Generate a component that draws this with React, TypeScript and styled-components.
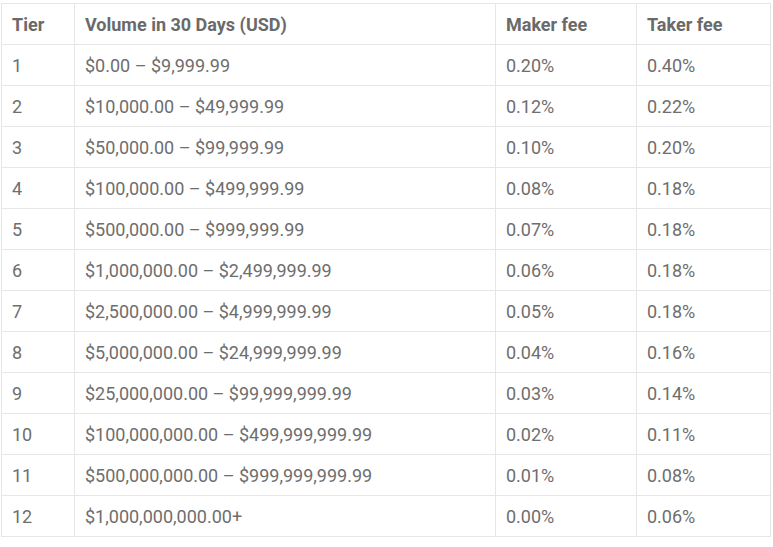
import styled, { createGlobalStyle } from "styled-components";

const GlobalStyle = createGlobalStyle`
  body {
    margin: 0;
    background: #ffffff;
    font-family: Roboto, "Liberation Sans", sans-serif;
  }
`;

type Tier = {
  tier: number;
  volume: string;
  maker: string;
  taker: string;
};

const tiers: Tier[] = [
  { tier: 1, volume: "$0.00 – $9,999.99", maker: "0.20%", taker: "0.40%" },
  { tier: 2, volume: "$10,000.00 – $49,999.99", maker: "0.12%", taker: "0.22%" },
  { tier: 3, volume: "$50,000.00 – $99,999.99", maker: "0.10%", taker: "0.20%" },
  { tier: 4, volume: "$100,000.00 – $499,999.99", maker: "0.08%", taker: "0.18%" },
  { tier: 5, volume: "$500,000.00 – $999,999.99", maker: "0.07%", taker: "0.18%" },
  { tier: 6, volume: "$1,000,000.00 – $2,499,999.99", maker: "0.06%", taker: "0.18%" },
  { tier: 7, volume: "$2,500,000.00 – $4,999,999.99", maker: "0.05%", taker: "0.18%" },
  { tier: 8, volume: "$5,000,000.00 – $24,999,999.99", maker: "0.04%", taker: "0.16%" },
  { tier: 9, volume: "$25,000,000.00 – $99,999,999.99", maker: "0.03%", taker: "0.14%" },
  { tier: 10, volume: "$100,000,000.00 – $499,999,999.99", maker: "0.02%", taker: "0.11%" },
  { tier: 11, volume: "$500,000,000.00 – $999,999,999.99", maker: "0.01%", taker: "0.08%" },
  { tier: 12, volume: "$1,000,000,000.00+", maker: "0.00%", taker: "0.06%" },
];

export default function App() {
  return (
    <>
      <GlobalStyle />
      <Page>
        <FeeTable>
          <colgroup>
            <col style={{ width: 73 }} />
            <col style={{ width: 421 }} />
            <col style={{ width: 141 }} />
            <col style={{ width: 134 }} />
          </colgroup>
          <thead>
            <tr>
              <HeadCell>Tier</HeadCell>
              <HeadCell>Volume in 30 Days (USD)</HeadCell>
              <HeadCell>Maker fee</HeadCell>
              <HeadCell>Taker fee</HeadCell>
            </tr>
          </thead>
          <tbody>
            {tiers.map((t) => (
              <tr key={t.tier}>
                <Cell>{t.tier}</Cell>
                <Cell>{t.volume}</Cell>
                <Cell>{t.maker}</Cell>
                <Cell>{t.taker}</Cell>
              </tr>
            ))}
          </tbody>
        </FeeTable>
      </Page>
    </>
  );
}

/** styles */

const Page = styled.div`
  padding: 3px 0 0 1px;
`;

const FeeTable = styled.table`
  border-collapse: collapse;
  table-layout: fixed;
  width: 770px;
  color: #6e6e6e;
  font-size: 18px;
`;

const Cell = styled.td`
  height: 41px;
  padding: 0 10px;
  border: 1px solid #e6e6e6;
  box-sizing: border-box;
  vertical-align: middle;
  white-space: nowrap;
  font-weight: 400;
  text-align: left;
`;

const HeadCell = styled(Cell).attrs({ as: "th" })`
  font-weight: 700;
  color: #6a6a6a;
`;
